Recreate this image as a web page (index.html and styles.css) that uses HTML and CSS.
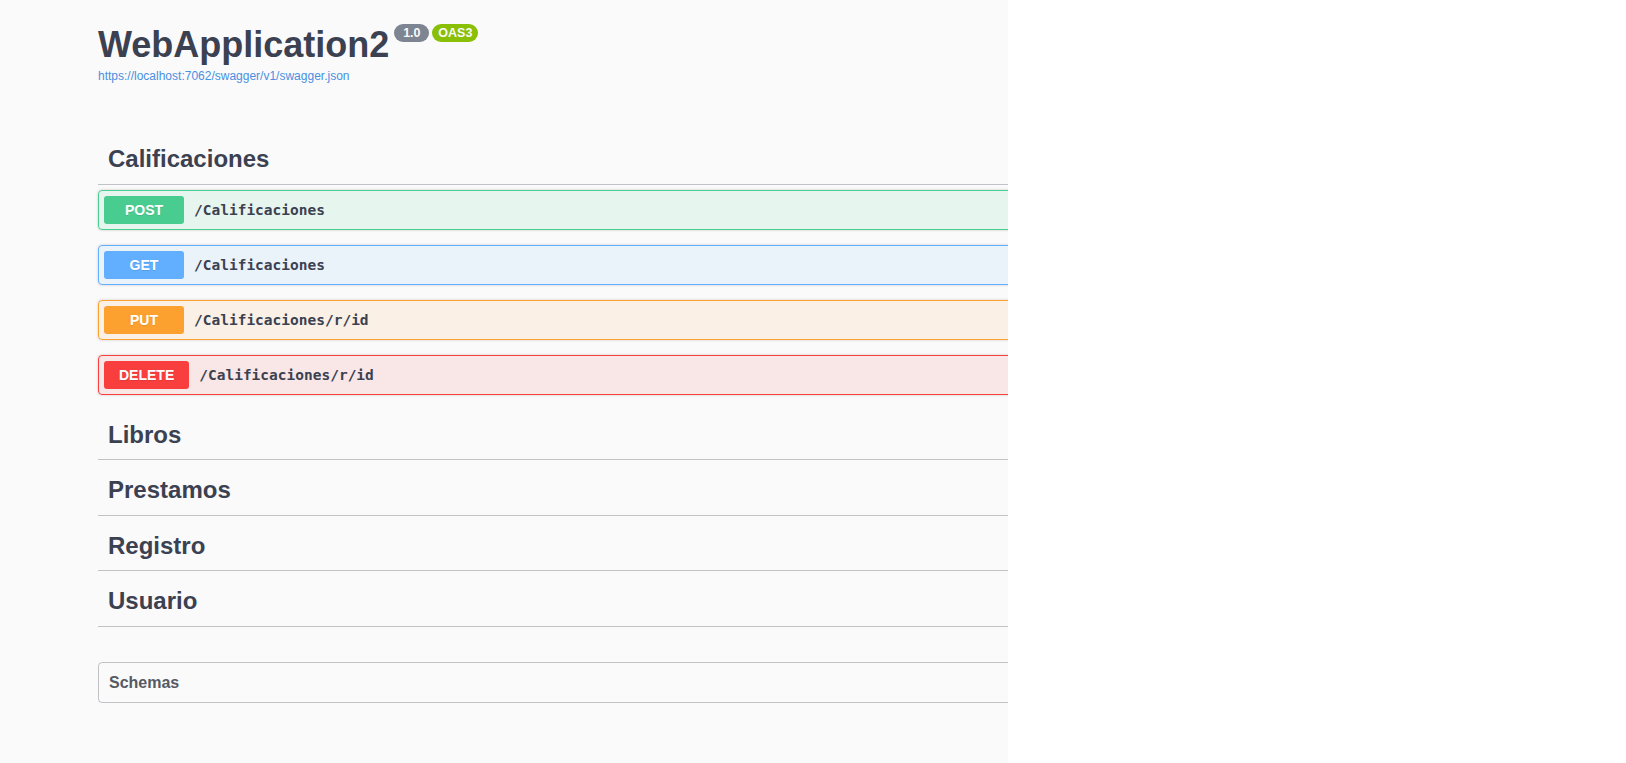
FILE: index.html
```html
<!DOCTYPE html>
<html lang="es">
<head>
<meta charset="utf-8">
<title>WebApplication2</title>
<link rel="stylesheet" href="styles.css">
</head>
<body>
<div class="page">
  <div class="wrapper">
    <hgroup class="info">
      <h2 class="title">WebApplication2<span class="badge version">1.0</span><span class="badge oas">OAS3</span></h2>
      <a class="url" href="#">https://localhost:7062/swagger/v1/swagger.json</a>
    </hgroup>

    <div class="tags">
      <section class="tag-section">
        <h3 class="tag">Calificaciones</h3>
        <div class="ops">
          <div class="opblock post"><span class="method">POST</span><span class="path">/Calificaciones</span></div>
          <div class="opblock get"><span class="method">GET</span><span class="path">/Calificaciones</span></div>
          <div class="opblock put"><span class="method">PUT</span><span class="path">/Calificaciones/r/id</span></div>
          <div class="opblock delete"><span class="method">DELETE</span><span class="path">/Calificaciones/r/id</span></div>
        </div>
      </section>
      <section class="tag-section"><h3 class="tag">Libros</h3></section>
      <section class="tag-section"><h3 class="tag">Prestamos</h3></section>
      <section class="tag-section"><h3 class="tag">Registro</h3></section>
      <section class="tag-section"><h3 class="tag">Usuario</h3></section>
    </div>

    <section class="models">
      <h4 class="models-title">Schemas</h4>
    </section>
  </div>
</div>
</body>
</html>
```

FILE: styles.css
```css
html, body {
  margin: 0;
  padding: 0;
  background: #ffffff;
}

.page {
  width: 1008px;
  height: 763px;
  background: #fafafa;
  overflow: hidden;
  font-family: "Liberation Sans", Arial, sans-serif;
  color: #3b4151;
}

.wrapper {
  width: 1420px;
  padding-left: 98px;
}

.info {
  margin: 0;
  padding-top: 24px;
}

.title {
  margin: 0;
  font-size: 36px;
  font-weight: 700;
  line-height: 41.4px;
  color: #3b4151;
  white-space: nowrap;
}

.badge {
  display: inline-block;
  vertical-align: top;
  height: 18px;
  line-height: 18px;
  border-radius: 57px;
  font-size: 12.5px;
  font-weight: 700;
  color: #fafafa;
  text-align: center;
  box-sizing: border-box;
}

.version {
  background: #7d8492;
  margin-left: 5px;
  width: 35px;
}

.oas {
  background: #89bf04;
  margin-left: 3px;
  width: 46px;
}

.url {
  display: block;
  margin-top: 5px;
  font-size: 12px;
  line-height: 13.8px;
  color: #4990e2;
  text-decoration: none;
}

.tags {
  margin-top: 50px;
}

.tag {
  display: flex;
  align-items: center;
  box-sizing: border-box;
  height: 50.5px;
  margin: 0 0 5px;
  padding: 10px 20px 10px 10px;
  border-bottom: 1px solid rgba(59, 65, 81, 0.3);
  font-size: 24px;
  font-weight: 700;
  line-height: 27.6px;
  color: #3b4151;
}

.opblock {
  display: flex;
  align-items: center;
  padding: 5px;
  margin-bottom: 15px;
  border: 1px solid #000;
  border-radius: 4px;
  box-shadow: 0 0 3px rgba(0, 0, 0, 0.19);
}

.method {
  box-sizing: border-box;
  min-width: 80px;
  padding: 6px 15px;
  border-radius: 3px;
  font-size: 14px;
  font-weight: 700;
  line-height: 16px;
  color: #ffffff;
  text-align: center;
  text-shadow: 0 1px 0 rgba(0, 0, 0, 0.1);
}

.path {
  padding: 0 10px;
  font-family: "DejaVu Sans Mono", "Liberation Mono", monospace;
  font-size: 14.5px;
  font-weight: 700;
  color: #3b4151;
}

.post { background: rgba(73, 204, 144, 0.1); border-color: #49cc90; }
.post .method { background: #49cc90; }

.get { background: rgba(97, 175, 254, 0.1); border-color: #61affe; }
.get .method { background: #61affe; }

.put { background: rgba(252, 161, 48, 0.1); border-color: #fca130; }
.put .method { background: #fca130; }

.delete { background: rgba(249, 62, 62, 0.1); border-color: #f93e3e; }
.delete .method { background: #f93e3e; }

.models {
  margin: 35px 0 30px;
  border: 1px solid rgba(59, 65, 81, 0.3);
  border-radius: 4px;
}

.models-title {
  margin: 0;
  padding: 10px 20px 10px 10px;
  font-size: 16px;
  font-weight: 700;
  line-height: 19px;
  color: #555a64;
}
```
